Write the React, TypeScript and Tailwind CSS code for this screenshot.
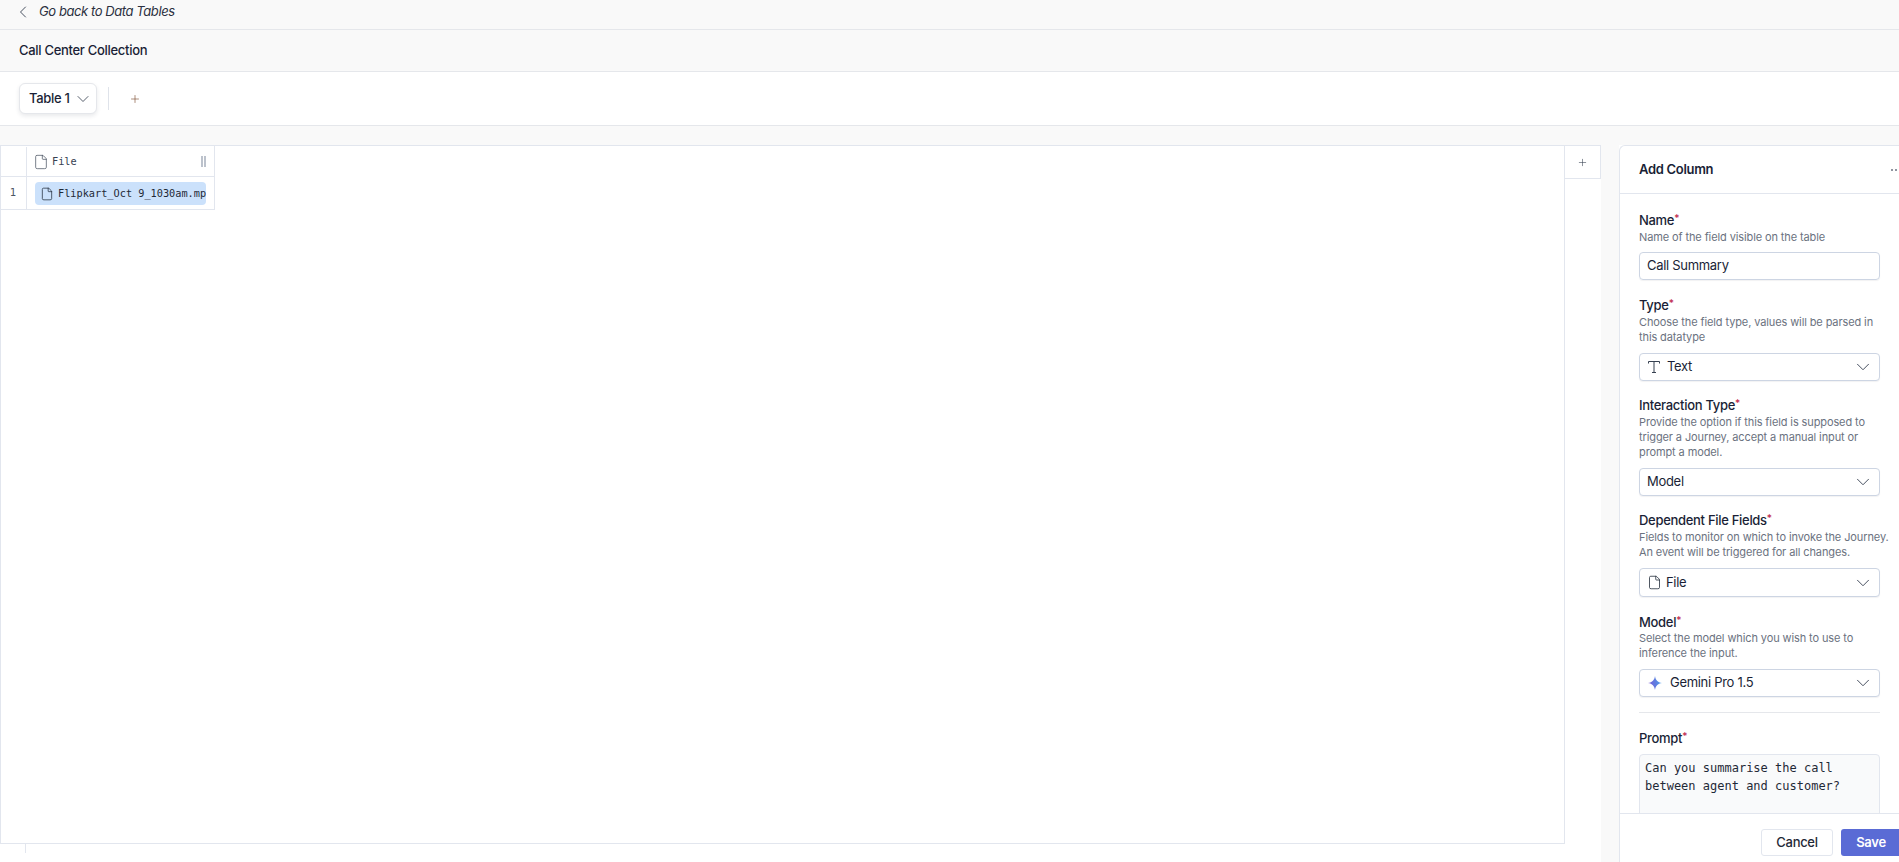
import React from "react";
import { ChevronLeft, ChevronDown, Plus, File as FileIcon } from "lucide-react";

const sans = "font-['Inter','Liberation_Sans',sans-serif]";
const mono = "font-['DejaVu_Sans_Mono','Liberation_Mono',monospace] tracking-normal";

function Label({ children, className = "" }: { children: React.ReactNode; className?: string }) {
  return (
    <div className={`text-[13px] leading-[16px] font-medium text-[#1a1f36] ${className}`}>
      {children}
      <span className="text-[#c0264b] text-[10px] align-top leading-[12px]">*</span>
    </div>
  );
}

function Desc({ children, className = "mt-[2px]" }: { children: React.ReactNode; className?: string }) {
  return <div className={`whitespace-nowrap text-[11px] leading-[15px] text-[#6b7280] tracking-[-0.01em] ${className}`}>{children}</div>;
}

function Select({ children, h = "h-[28px]" }: { children: React.ReactNode; h?: string }) {
  return (
    <div className={`${h} mt-[8px] flex items-center justify-between rounded-[4px] border border-[#cdd5e3] bg-white pl-[7px] pr-[5px] shadow-[0_1px_1px_rgba(30,41,59,0.06)]`}>
      <div className="flex items-center text-[13px] text-[#1a1f36]">{children}</div>
      <ChevronDown size={22} strokeWidth={1} className="text-[#374151]" />
    </div>
  );
}

function Gemini() {
  return (
    <svg width="16" height="16" viewBox="0 0 16 16" className="mr-[7px]">
      <defs>
        <linearGradient id="gem" x1="0" y1="0.6" x2="1" y2="0.4">
          <stop offset="0" stopColor="#7b5ad6" />
          <stop offset="0.55" stopColor="#5f7fe0" />
          <stop offset="1" stopColor="#4aa3ee" />
        </linearGradient>
      </defs>
      <path d="M8 1C8.6 5 10.6 7.3 15 8 10.6 8.7 8.6 11 8 15 7.4 11 5.4 8.7 1 8 5.4 7.3 7.4 5 8 1Z" fill="url(#gem)" />
    </svg>
  );
}

function TIcon() {
  return (
    <svg width="14" height="14" viewBox="0 0 14 14" fill="none" stroke="#374151" strokeWidth="1" className="mr-[6px]">
      <path d="M1.5 3.5V1.5H12.5V3.5M7 1.5V12.5M5 12.5H9" />
    </svg>
  );
}

export default function App() {
  return (
    <div className={`${sans} flex h-[862px] w-[1899px] flex-col overflow-hidden bg-white tracking-[-0.3px]`}>
      <div className="flex h-[30px] shrink-0 items-center border-b border-[#e5e7eb] bg-[#f9f9f9] pb-[6px] pl-[13px]">
        <ChevronLeft size={20} strokeWidth={1.1} className="text-[#374151]" />
        <span className="ml-[6px] text-[13px] italic tracking-[-0.42px] text-[#2b3040]">Go back to Data Tables</span>
      </div>
      <div className="flex h-[42px] shrink-0 items-center border-b border-[#e5e7eb] bg-[#f9f9f9] pl-[19px] text-[13px] font-medium text-[#1a1f36]">
        Call Center Collection
      </div>
      <div className="flex h-[54px] shrink-0 items-center border-b border-[#e5e7eb] bg-white pl-[19px]">
        <div className="flex h-[31px] w-[78px] items-center rounded-[6px] border border-[#e5e7eb] bg-white pl-[9px] text-[13px] font-medium text-[#1a1f36] shadow-[0_2px_4px_rgba(30,41,59,0.1)]">
          Table 1
          <ChevronDown size={20} strokeWidth={1} className="ml-[3px] text-[#374151]" />
        </div>
        <div className="ml-[11px] h-[23px] w-px bg-[#dfe3ea]" />
        <Plus size={12} strokeWidth={1.25} className="ml-[20px] text-[#7c4a2f]" />
      </div>
      <div className="h-[19px] shrink-0 bg-[#f9f9f9]" />
      <div className="flex min-h-0 flex-1">
        <div className="w-[1601px] shrink-0 bg-white">
          <div className="flex items-start">
            <div className="h-[699px] w-[1565px] shrink-0 border border-[#e2e6ee]">
              <div className="w-[214px] border-r border-[#e2e6ee]">
                <div className="flex h-[31px] items-center border-b border-[#e2e6ee] pt-[1px]">
                  <div className="h-full w-[26px] shrink-0 border-r border-[#e2e6ee]" />
                  <FileIcon size={16} strokeWidth={1} className="ml-[6px] text-[#374151]" />
                  <span className={`${mono} ml-[3px] flex-1 text-[10.25px] text-[#374151]`}>File</span>
                  <div className="mr-[8px] flex gap-[1px]">
                    <div className="h-[11px] w-[2px] bg-[#bcc2cc]" />
                    <div className="h-[11px] w-[2px] bg-[#bcc2cc]" />
                  </div>
                </div>
                <div className="flex h-[33px] items-center border-b border-[#e2e6ee]">
                  <div className={`${mono} flex h-full w-[26px] shrink-0 items-center justify-center border-r border-[#e2e6ee] pr-[1px] text-[10.5px] text-[#4b5563]`}>1</div>
                  <div className="ml-[8px] mt-[1px] flex h-[23px] w-[171px] items-center overflow-hidden rounded-[4px] bg-[#cbe1fb] pl-[5px]">
                    <FileIcon size={14} strokeWidth={1.25} className="shrink-0 text-[#1f2937]" />
                    <span className={`${mono} ml-[4px] whitespace-nowrap text-[10.25px] text-[#1f2937]`}>Flipkart_Oct 9_1030am.mp</span>
                  </div>
                </div>
              </div>
            </div>
            <div className="flex h-[34px] w-[37px] items-center justify-center border-y border-r border-[#e2e6ee]">
              <Plus size={11} strokeWidth={1.25} className="text-[#374151]" />
            </div>
          </div>
          <div className="ml-[25px] h-[9px] w-px bg-[#e2e6ee]" />
        </div>
        <div className="w-[18px] shrink-0 bg-[#f9f9f9]" />
        <div className="flex w-[280px] shrink-0 flex-col overflow-hidden rounded-tl-[6px] border-l border-t border-[#e2e6ee] bg-white">
          <div className="flex h-[48px] shrink-0 items-center justify-between border-b border-[#e2e6ee] pl-[19px] pr-[2px]">
            <span className="text-[13px] font-semibold text-[#1a1f36]">Add Column</span>
            <span className="flex gap-[2px]">
              <span className="h-[2px] w-[2px] rounded-full bg-[#6b7280]" />
              <span className="h-[2px] w-[2px] rounded-full bg-[#6b7280]" />
            </span>
          </div>
          <div className="min-h-0 flex-1 overflow-hidden pl-[19px] pr-[19px] pt-[18px]">
            <Label>Name</Label>
            <Desc>Name of the field visible on the table</Desc>
            <div className="mt-[7px] flex h-[28px] items-center rounded-[4px] border border-[#cdd5e3] pl-[7px] text-[13px] text-[#1a1f36] shadow-[0_1px_1px_rgba(30,41,59,0.06)]">
              Call Summary
            </div>
            <Label className="mt-[17px]">Type</Label>
            <Desc>
              Choose the field type, values will be parsed in
              <br />
              this datatype
            </Desc>
            <Select>
              <TIcon />
              Text
            </Select>
            <Label className="mt-[16px]">Interaction Type</Label>
            <Desc>
              Provide the option if this field is supposed to
              <br />
              trigger a Journey, accept a manual input or
              <br />
              prompt a model.
            </Desc>
            <Select>Model</Select>
            <Label className="mt-[16px]">Dependent File Fields</Label>
            <Desc>
              Fields to monitor on which to invoke the Journey.
              <br />
              An event will be triggered for all changes.
            </Desc>
            <Select h="h-[29px]">
              <FileIcon size={15} strokeWidth={1.25} className="mr-[4px] text-[#1f2937]" />
              File
            </Select>
            <Label className="mt-[17px]">Model</Label>
            <Desc className="mt-[1px]">
              Select the model which you wish to use to
              <br />
              inference the input.
            </Desc>
            <Select>
              <Gemini />
              Gemini Pro 1.5
            </Select>
            <div className="mt-[15px] h-px bg-[#e5e7eb]" />
            <Label className="mt-[17px]">Prompt</Label>
            <div className={`${mono} mt-[8px] h-[100px] rounded-[4px] border border-[#e2e6ee] bg-[#f9fafb] pl-[5px] pt-[4px] text-[12px] leading-[18px] text-[#1f2937]`}>
              Can you summarise the call
              <br />
              between agent and customer?
            </div>
          </div>
          <div className="flex h-[49px] shrink-0 items-start overflow-hidden border-t border-[#e2e6ee] bg-white pl-[141px] pt-[15px]">
            <div className="flex h-[27px] w-[72px] shrink-0 items-center justify-center rounded-[3px] border border-[#e2e6ee] text-[13px] font-medium text-[#1f2937]">
              Cancel
            </div>
            <div className="ml-[8px] flex h-[27px] w-[60px] shrink-0 items-center justify-center rounded-[3px] bg-[#5a6bd5] text-[13px] font-semibold text-white">
              Save
            </div>
          </div>
        </div>
      </div>
    </div>
  );
}
